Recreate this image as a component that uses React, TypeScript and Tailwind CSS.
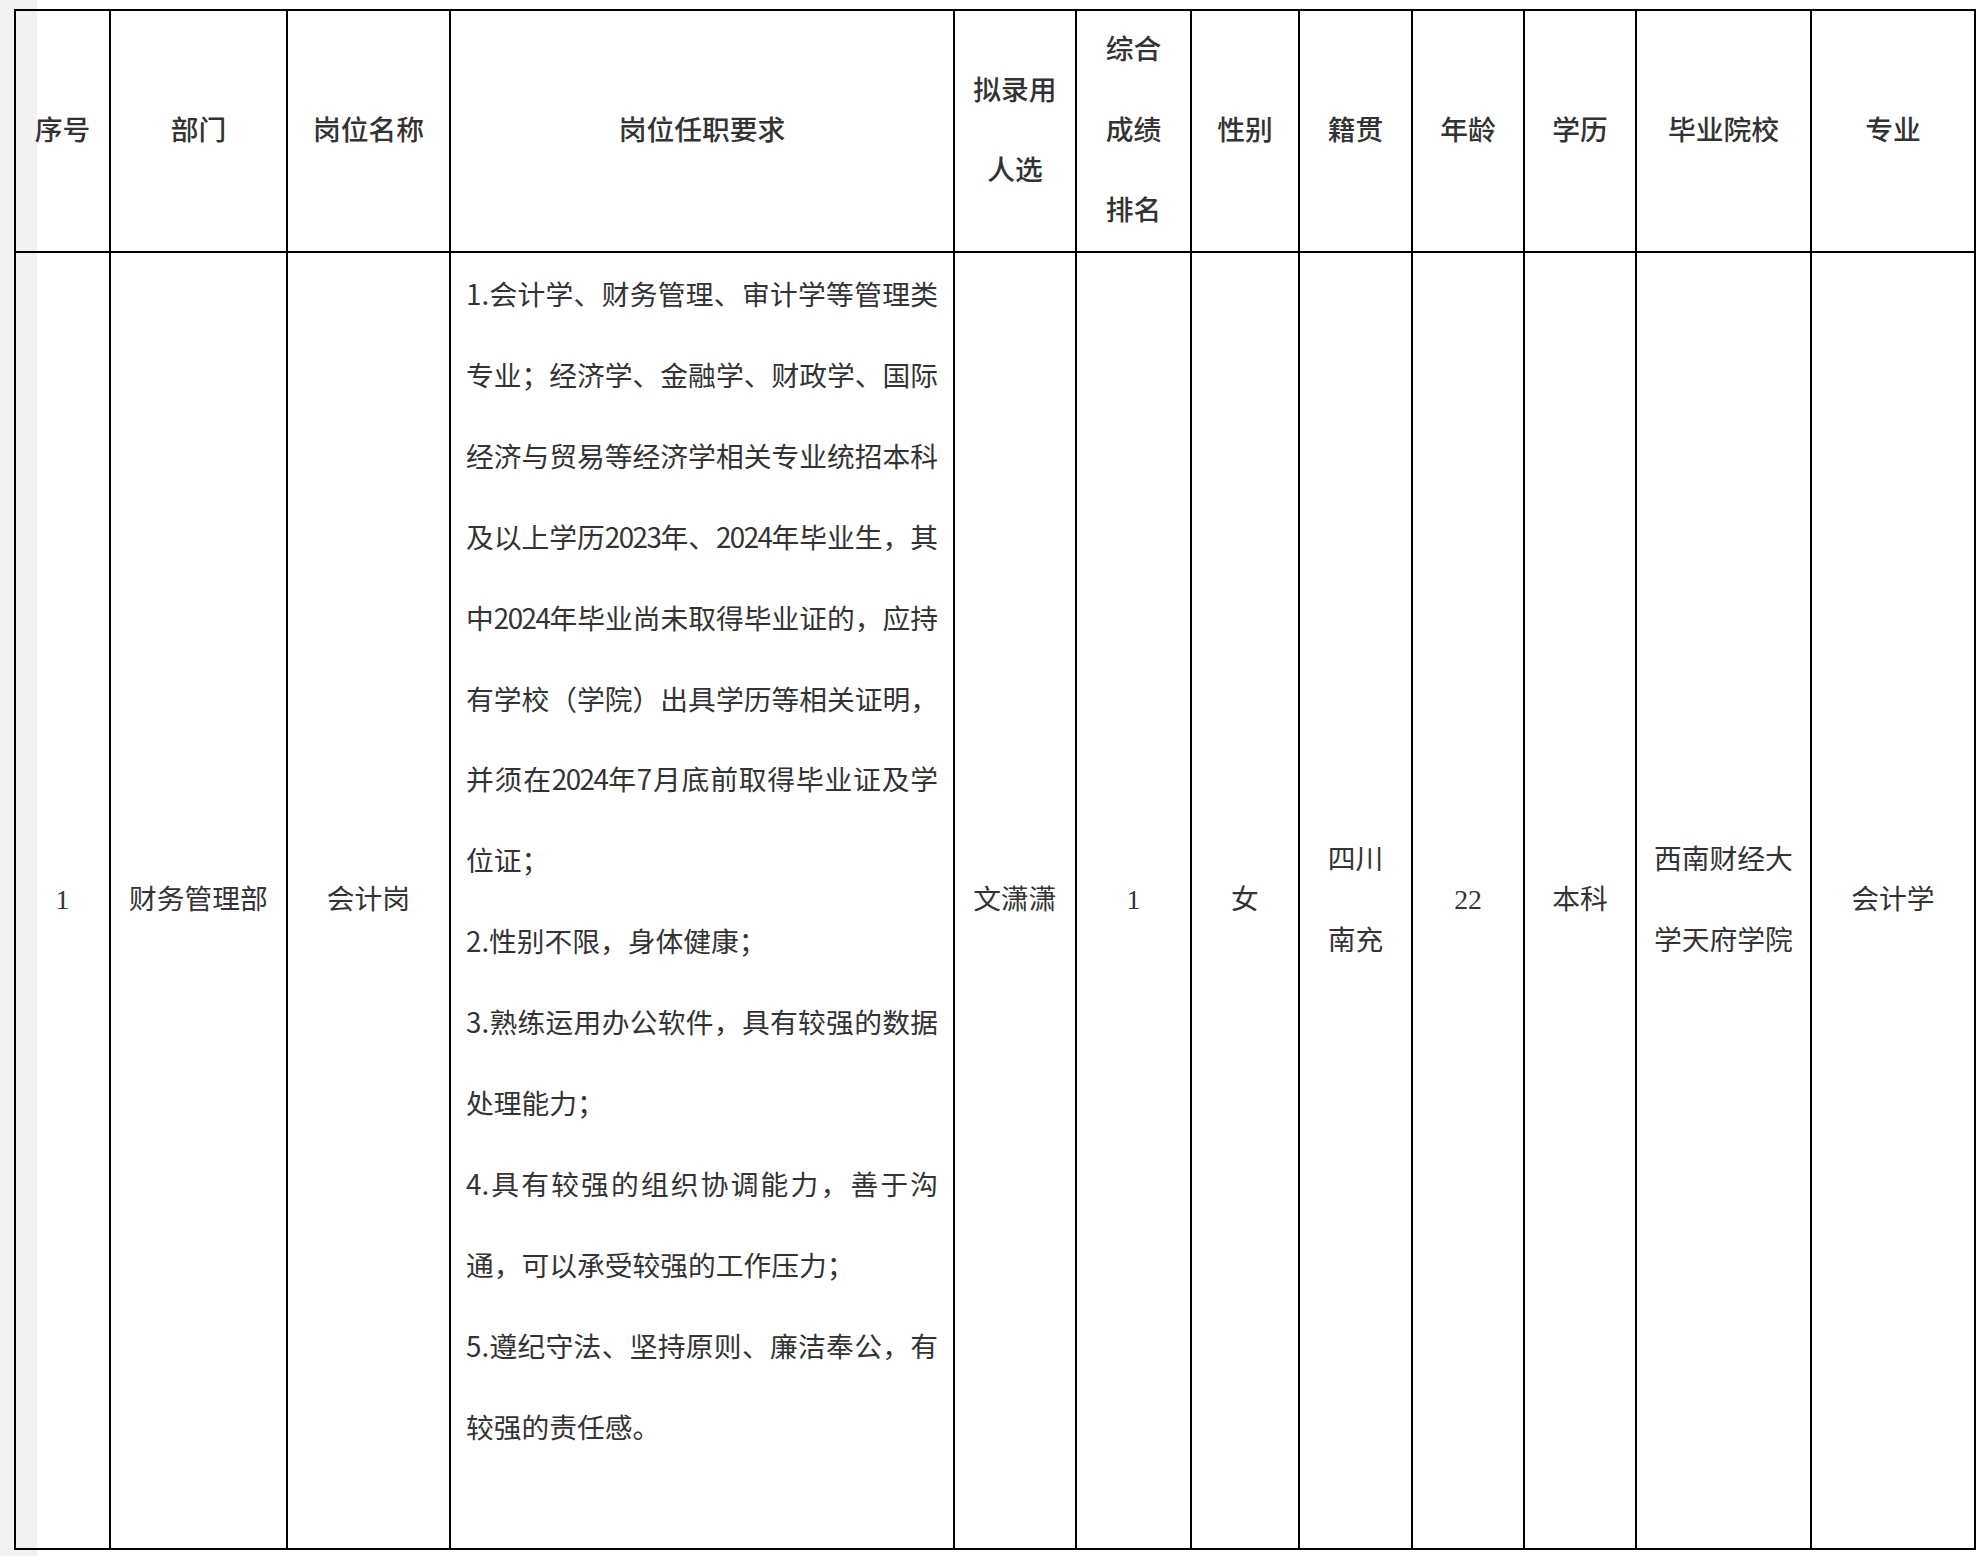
import React from "react";

const headers = [
  "序号",
  "部门",
  "岗位名称",
  "岗位任职要求",
  "拟录用人选",
  "综合成绩排名",
  "性别",
  "籍贯",
  "年龄",
  "学历",
  "毕业院校",
  "专业",
];

// each visual line of the requirements cell, full = justified to both edges
const requirementLines: { text: string; full: boolean }[] = [
  { text: "1.会计学、财务管理、审计学等管理类", full: true },
  { text: "专业；经济学、金融学、财政学、国际", full: true },
  { text: "经济与贸易等经济学相关专业统招本科", full: true },
  { text: "及以上学历2023年、2024年毕业生，其", full: true },
  { text: "中2024年毕业尚未取得毕业证的，应持", full: true },
  { text: "有学校（学院）出具学历等相关证明，", full: true },
  { text: "并须在2024年7月底前取得毕业证及学", full: true },
  { text: "位证；", full: false },
  { text: "2.性别不限，身体健康；", full: false },
  { text: "3.熟练运用办公软件，具有较强的数据", full: true },
  { text: "处理能力；", full: false },
  { text: "4.具有较强的组织协调能力，善于沟", full: true },
  { text: "通，可以承受较强的工作压力；", full: false },
  { text: "5.遵纪守法、坚持原则、廉洁奉公，有", full: true },
  { text: "较强的责任感。", full: false },
];

const serif = "font-['Liberation_Serif','Noto_Sans_CJK_SC',serif]";

// digits of the original font are narrower, tighten the runs of numbers a bit
const Line = ({ text }: { text: string }) => (
  <>
    {text.split(/(\d{2,})/).map((part, i) =>
      /^\d{2,}$/.test(part) ? (
        <span key={i} className="tracking-[-1.5px]">
          {part}
        </span>
      ) : (
        <React.Fragment key={i}>{part}</React.Fragment>
      )
    )}
  </>
);

const Cell = ({ children, bold }: { children: React.ReactNode; bold?: boolean }) => (
  <div
    className={`flex items-center justify-center border-r-2 border-b-2 border-black px-[17px] text-center leading-[80.5px] text-[#333] ${serif} ${
      bold ? "font-medium text-[#222]" : "font-normal"
    }`}
  >
    <span>{children}</span>
  </div>
);

export default function App() {
  return (
    <div className="min-h-screen w-full bg-[linear-gradient(to_right,#f2f2f2_37px,#ffffff_37px)] pt-[9px] pl-[14px]">
      <div className="grid w-max grid-cols-[95px_177px_163px_504px_122px_115px_108px_113px_112px_112px_175px_164px] grid-rows-[242px_1297px] border-l-2 border-t-2 border-black text-[27.75px]">
        {headers.map((h) => (
          <Cell key={h} bold>
            {h}
          </Cell>
        ))}

        <Cell>1</Cell>
        <Cell>财务管理部</Cell>
        <Cell>会计岗</Cell>

        <div className="flex flex-col border-r-2 border-b-2 border-black px-[15px] font-['Noto_Sans_CJK_SC',sans-serif] leading-[80.9px] text-[#333]">
          {requirementLines.map((line, i) => (
            <div
              key={i}
              className={`whitespace-nowrap ${
                line.full ? "text-justify [text-align-last:justify]" : "text-left"
              }`}
            >
              <Line text={line.text} />
            </div>
          ))}
          <div className="h-[80.9px]" />
        </div>

        <Cell>文潇潇</Cell>
        <Cell>1</Cell>
        <Cell>女</Cell>
        <Cell>四川南充</Cell>
        <Cell>22</Cell>
        <Cell>本科</Cell>
        <Cell>西南财经大学天府学院</Cell>
        <Cell>会计学</Cell>
      </div>
    </div>
  );
}
